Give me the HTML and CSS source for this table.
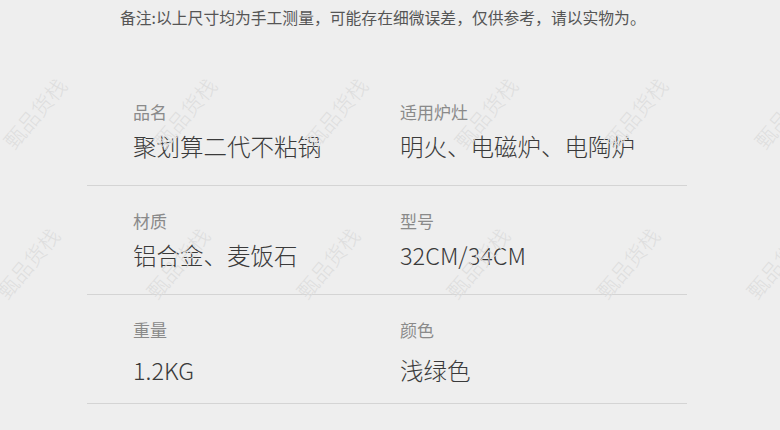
FILE: index.html
```html
<!DOCTYPE html>
<html lang="zh-CN">
<head>
<meta charset="utf-8">
<title>商品参数</title>
<link rel="stylesheet" href="styles.css">
</head>
<body>
<div class="page">
  <p class="note">备注:以上尺寸均为手工测量，可能存在细微误差，仅供参考，请以实物为。</p>
  <div class="table">
    <div class="row">
      <div class="cell"><div class="label">品名</div><div class="value">聚划算二代不粘锅</div></div>
      <div class="cell"><div class="label">适用炉灶</div><div class="value">明火、电磁炉、电陶炉</div></div>
    </div>
    <div class="row">
      <div class="cell"><div class="label">材质</div><div class="value">铝合金、麦饭石</div></div>
      <div class="cell"><div class="label">型号</div><div class="value">32CM/34CM</div></div>
    </div>
    <div class="row row-wide">
      <div class="cell"><div class="label">重量</div><div class="value">1.2KG</div></div>
      <div class="cell"><div class="label">颜色</div><div class="value">浅绿色</div></div>
    </div>
  </div>
  <div class="watermarks" aria-hidden="true">
    <span class="wm" style="left:35px;top:113px">甄品货栈</span>
    <span class="wm" style="left:185px;top:113px">甄品货栈</span>
    <span class="wm" style="left:336px;top:113px">甄品货栈</span>
    <span class="wm" style="left:486px;top:113px">甄品货栈</span>
    <span class="wm" style="left:636px;top:113px">甄品货栈</span>
    <span class="wm" style="left:786px;top:113px">甄品货栈</span>
    <span class="wm" style="left:28px;top:263px">甄品货栈</span>
    <span class="wm" style="left:178px;top:263px">甄品货栈</span>
    <span class="wm" style="left:328px;top:263px">甄品货栈</span>
    <span class="wm" style="left:478px;top:263px">甄品货栈</span>
    <span class="wm" style="left:628px;top:263px">甄品货栈</span>
    <span class="wm" style="left:778px;top:263px">甄品货栈</span>
  </div>
</div>
</body>
</html>
```

FILE: styles.css
```css
html, body {
  margin: 0;
  padding: 0;
  background: #eeeeee;
}
body {
  font-family: "Noto Sans CJK SC", "Noto Sans", sans-serif;
  width: 780px;
  height: 430px;
  overflow: hidden;
}
.page {
  position: relative;
  width: 780px;
  height: 430px;
  overflow: hidden;
}
.note {
  margin: 0;
  padding: 8px 0 0 120px;
  font-size: 15.8px;
  line-height: 20px;
  color: #555555;
  white-space: nowrap;
}
.table {
  margin: 49px 0 0 87px;
  width: 600px;
}
.row {
  display: grid;
  grid-template-columns: 267px 1fr;
  padding: 25px 0 24px 46px;
  border-bottom: 1px solid #d4d4d4;
}
.cell {
  display: flex;
  flex-direction: column;
  gap: 9px;
}
.row-wide {
  padding-bottom: 18px;
}
.row-wide .cell {
  gap: 15px;
}
.label {
  font-size: 17px;
  line-height: 20px;
  color: #8a8a8a;
}
.value {
  font-size: 23.5px;
  line-height: 30px;
  color: #3a3a3a;
  font-weight: 300;
  white-space: nowrap;
}
.watermarks {
  position: absolute;
  inset: 0;
  pointer-events: none;
}
.wm {
  position: absolute;
  transform: translate(-50%, -50%) rotate(-50deg);
  font-size: 21px;
  line-height: 21px;
  color: #dedede;
  white-space: nowrap;
  font-weight: 300;
}
```
